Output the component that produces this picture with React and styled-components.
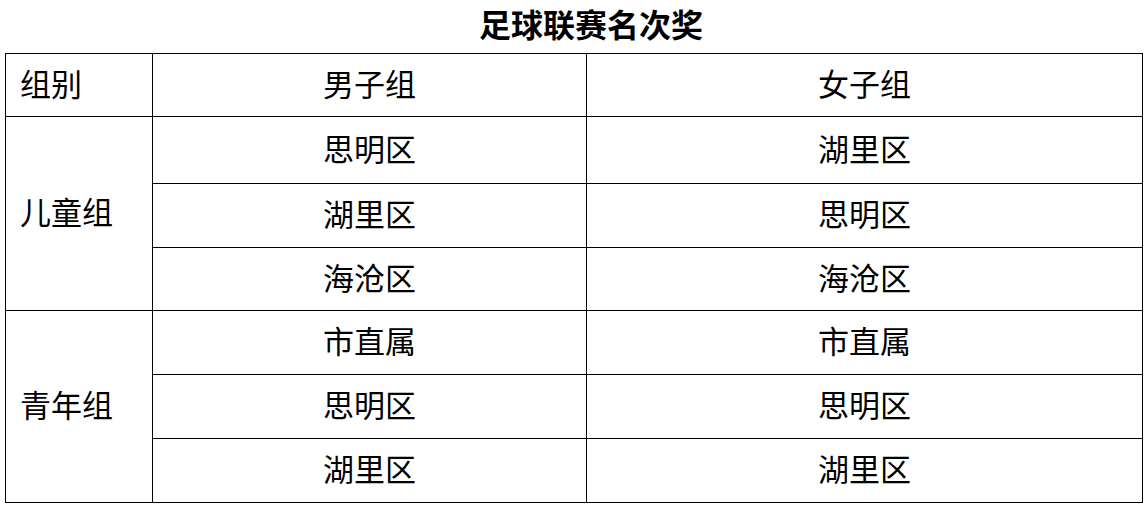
import React from "react";
import styled, { createGlobalStyle } from "styled-components";

const Global = createGlobalStyle`
  html, body { margin: 0; padding: 0; background: #fff; }
  body { font-family: "Noto Sans CJK SC", "Noto Sans", sans-serif; color: #000; }
`;

const Page = styled.div`
  width: 1148px;
  padding-left: 5px;
  box-sizing: border-box;
`;

const Title = styled.h1`
  margin: 0;
  height: 53px;
  line-height: 46px;
  font-size: 32px;
  font-weight: 700;
  text-align: center;
  padding-left: 29px;
`;

const Table = styled.table`
  border-collapse: collapse;
  table-layout: fixed;
  width: 1137px;
`;

const Row = styled.tr`
  height: ${(p) => p.$h}px;
`;

const Cell = styled.td`
  border: 1.5px solid #000;
  padding: 0 0 6px 0;
  font-size: 31px;
  line-height: 1;
  vertical-align: middle;
  text-align: ${(p) => (p.$left ? "left" : "center")};
  padding-left: ${(p) => (p.$left ? "14px" : "0")};
  white-space: nowrap;
`;

const groups = [
  { name: "儿童组", rows: [["思明区", "湖里区"], ["湖里区", "思明区"], ["海沧区", "海沧区"]], h: [67, 64, 63] },
  { name: "青年组", rows: [["市直属", "市直属"], ["思明区", "思明区"], ["湖里区", "湖里区"]], h: [64, 64, 64] },
];

export default function App() {
  return (
    <Page>
      <Global />
      <Title>足球联赛名次奖</Title>
      <Table>
        <colgroup>
          <col style={{ width: 147 }} />
          <col style={{ width: 434 }} />
          <col style={{ width: 556 }} />
        </colgroup>
        <tbody>
          <Row $h={63}>
            <Cell $left>组别</Cell>
            <Cell>男子组</Cell>
            <Cell>女子组</Cell>
          </Row>
          {groups.map((g) =>
            g.rows.map((r, i) => (
              <Row key={g.name + i} $h={g.h[i]}>
                {i === 0 && (
                  <Cell $left rowSpan={3}>
                    {g.name}
                  </Cell>
                )}
                <Cell>{r[0]}</Cell>
                <Cell>{r[1]}</Cell>
              </Row>
            ))
          )}
        </tbody>
      </Table>
    </Page>
  );
}
